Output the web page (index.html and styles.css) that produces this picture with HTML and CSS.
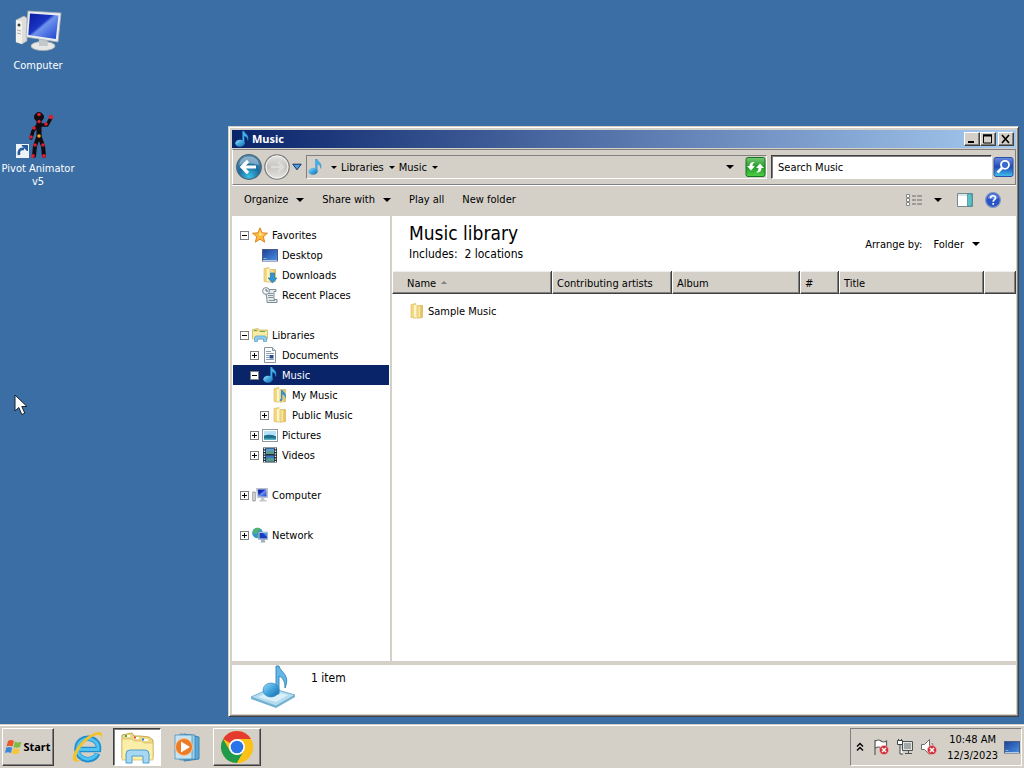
FILE: index.html
```html
<!DOCTYPE html>
<html lang="en">
<head>
<meta charset="utf-8">
<title>Music</title>
<link rel="stylesheet" href="styles.css">
</head>
<body>
<svg class="defs" aria-hidden="true">
  <defs>
    <linearGradient id="gBlue" x1="0" y1="0" x2="1" y2="1"><stop offset="0" stop-color="#9fdcf8"/><stop offset=".5" stop-color="#3fa4de"/><stop offset="1" stop-color="#1667a8"/></linearGradient>
    <linearGradient id="gFolder" x1="0" y1="0" x2="1" y2="0"><stop offset="0" stop-color="#f8e9a0"/><stop offset="1" stop-color="#e3bd58"/></linearGradient>
    <linearGradient id="gScreen" x1="0" y1="0" x2="1" y2="1"><stop offset="0" stop-color="#0a1a9c"/><stop offset=".42" stop-color="#1a35c4"/><stop offset=".5" stop-color="#6f93ec"/><stop offset="1" stop-color="#1b3fd0"/></linearGradient>
    <linearGradient id="gDesk" x1="0" y1="0" x2="1" y2="1"><stop offset="0" stop-color="#1d3f96"/><stop offset="1" stop-color="#4a92e6"/></linearGradient>
    <radialGradient id="gBack" cx=".5" cy=".9" r=".9"><stop offset="0" stop-color="#3cc0e4"/><stop offset=".5" stop-color="#1b6d9f"/><stop offset="1" stop-color="#5a8fb0"/></radialGradient>
    <linearGradient id="gFwd" x1="0" y1="0" x2="0" y2="1"><stop offset="0" stop-color="#e4e3e0"/><stop offset=".5" stop-color="#c6c4c0"/><stop offset="1" stop-color="#e6e5e3"/></linearGradient>
    <linearGradient id="gGreen" x1="0" y1="0" x2="0" y2="1"><stop offset="0" stop-color="#77c877"/><stop offset=".5" stop-color="#229a2a"/><stop offset="1" stop-color="#4fd045"/></linearGradient>
    <linearGradient id="gFind" x1="0" y1="0" x2="0" y2="1"><stop offset="0" stop-color="#6c8be0"/><stop offset=".5" stop-color="#1f49b8"/><stop offset="1" stop-color="#40c4ec"/></linearGradient>
  </defs>
  <symbol id="note" viewBox="0 0 16 16"><path d="M8.500 0H10c.3 2.500 5.500 3.500 3.800 9.500-.2-2.800-1.400-4-3.600-4.500V12H8.500z" fill="#45aee8" stroke="#2385c4" stroke-width=".4"/><ellipse cx="6" cy="12.200" rx="4.700" ry="3.500" fill="url(#gBlue)"/></symbol>
  <symbol id="star" viewBox="0 0 16 16"><path d="M8 .8l2 5 5.500.4-4.200 3.500 1.400 5.500L8 12.200l-4.700 3 1.400-5.500L.5 6.200 6 5.800z" fill="#fdb93a" stroke="#dc7a1e" stroke-width=".9"/><path d="M8 3.500l1.200 3.300 3.200.3-5.400 2z" fill="#ffeb9a"/></symbol>
  <symbol id="desk" viewBox="0 0 16 16"><rect x=".5" y="2.500" width="15" height="11.500" fill="url(#gDesk)" stroke="#4b5d84"/><path d="M1 13.500h14" stroke="#b9cbe6"/><path d="M1.500 11.500h3" stroke="#7fc0a4"/></symbol>
  <symbol id="folder" viewBox="0 0 16 16"><path d="M2 1.500L7 .5v14.800l-5-.8z" fill="#f3d880" stroke="#d9b85c" stroke-width=".6"/><path d="M5 2.500l3-1.200V15l-3-1z" fill="#fff6c8"/><path d="M8 5V2.500h5.500v12L8 15.300z" fill="url(#gFolder)" stroke="#d3ad52" stroke-width=".6"/><path d="M10.500 4v10" stroke="#f8e6a0"/></symbol>
  <symbol id="down" viewBox="0 0 16 16"><use href="#folder"/><path d="M8.500 6h4v5H15l-4.500 5L6 11h2.500z" fill="#2f96d4" stroke="#1a6fae" stroke-width=".6"/></symbol>
  <symbol id="mymusic" viewBox="0 0 16 16"><use href="#folder"/><path d="M9 3h1.500c.2 1.500 4.900 3 3.200 9-.2-2-1.200-4-3.200-4.500V13c-2 2.500-4 .5-2-1H9z" fill="#3b8fc6"/></symbol>
  <symbol id="recent" viewBox="0 0 16 16"><path d="M3 2.500h11v2h-2v8h3v3H5v-3z" fill="#e6eaec" stroke="#7e8c94"/><path d="M6 6.500h5M6 8.500h5M6 10.500h5M7 13.500h6" stroke="#86949c"/><circle cx="4" cy="4" r="3.400" fill="#f2f5f6" stroke="#7e8c94"/><path d="M4 2v2h2" stroke="#516c80" fill="none"/></symbol>
  <symbol id="libs" viewBox="0 0 16 16"><path d="M.5 2.500L6 1.500l1 1.500h8.500v9H.5z" fill="#eedc86" stroke="#c7b055" stroke-width=".7"/><path d="M1 5h14v7H1z" fill="#f8eca4"/><path d="M2 3.500h3M8 4.500h5" stroke="#64a85e"/><path d="M2.500 14.500V11q0-2 2-2h8q2 0 2 2v3.500h-3V12h-6v2.500z" fill="#8fcdf0" stroke="#4d9cc8" stroke-width=".7"/></symbol>
  <symbol id="doc" viewBox="0 0 16 16"><path d="M2.500.5h8l3 3v12h-11z" fill="#fff" stroke="#87949c"/><path d="M4 4.500h5M4 6.500h8M4 8.500h3M4 10.500h3M4 12.500h8" stroke="#8b9db0"/><path d="M7.500 8h4v3.500h-4z" fill="#274d8e"/><path d="M10.500.5v3h3" fill="#dce4ea" stroke="#87949c"/></symbol>
  <symbol id="pic" viewBox="0 0 16 16"><rect x=".5" y="2.500" width="15" height="12" fill="#fff" stroke="#8d9aa2"/><path d="M2 4h12v4H2z" fill="#b5e2f6"/><path d="M2 8.500q6-1.500 12 .5v4H2z" fill="#1f7090"/><path d="M2 11.500h12V13H2z" fill="#58b4bb"/></symbol>
  <symbol id="film" viewBox="0 0 16 16"><path d="M1 .5h14v15H1z" fill="#23303c"/><path d="M4 1.500h8V7H4z" fill="#5a9fd6"/><path d="M4 8.500h8v6H4z" fill="#3a78c0"/><path d="M4 6q4-4 8-1v2H4zM4 13q4-4 8-1v2.500H4z" fill="#5c9b88"/><path d="M2.500 1v14.500M13.500 1v14.500" stroke="#e9eef2" stroke-width="1.400" stroke-dasharray="1.300 1.300"/></symbol>
  <symbol id="pc" viewBox="0 0 16 16"><path d="M.7 5h2.600v9H.7z" fill="#dadbd8" stroke="#7f8588" stroke-width=".7"/><path d="M4.500 1.500h11v9h-10z" fill="#cbd3df" stroke="#9aa3b6" stroke-width=".6"/><path d="M5.800 2.500h8.700v7H6.500z" fill="url(#gScreen)"/><path d="M9 10.500h3l.5 2.500h2v1.500H7.500V13H9z" fill="#c2c8d0"/></symbol>
  <symbol id="net" viewBox="0 0 16 16"><circle cx="5.500" cy="6" r="5.300" fill="#3397cf"/><path d="M2 2.500Q6-.5 8.500 2L6 4 4.500 7 1 6zM5 8l3 1-1 2-2-1z" fill="#52b567"/><path d="M6.500 5h9v7.500h-9z" fill="#cdd8e2" stroke="#6c85a8" stroke-width=".5"/><path d="M7.500 6H15v5.500H7.500z" fill="#123fc4"/><path d="M11 6h4v4z" fill="#4b8fe8"/><path d="M9.500 12.500h3l1 3h-5z" fill="#9fafbf"/></symbol>
  <symbol id="badge" viewBox="0 0 10 10"><circle cx="5" cy="5" r="4.600" fill="#d3303a" stroke="#f1b1b1" stroke-width=".7"/><path d="M3 3l4 4M7 3L3 7" stroke="#fff" stroke-width="1.500"/></symbol>
</svg>

<main class="desktop">
  <a class="shortcut" href="#computer">
    <svg class="pic48" viewBox="0 0 48 48"><path d="M2 12l8-4 3 2v23l-5 3-6-2z" fill="#dddeda" stroke="#a2a7aa" stroke-width=".7"/><path d="M2 12l6 1v23l-6-2z" fill="#f1f1ee"/><circle cx="5" cy="17" r="1.500" fill="#38443f"/><path d="M3 22l4 1M3 25l4 1" stroke="#a9aaa5"/><ellipse cx="29" cy="38" rx="12" ry="4.500" fill="#e7e8e6" stroke="#a9adb0" stroke-width=".8"/><path d="M25 30h8l1 8h-9z" fill="#c4c8ca"/><path d="M14 3l33 2-3 29-32-5z" fill="#e9edef" stroke="#a7aeb6" stroke-width=".8"/><path d="M16 5.500l28.500 2-2.700 23.500L14.300 27z" fill="url(#gScreen)"/></svg>
    <span>Computer</span>
  </a>
  <a class="shortcut" href="#pivot">
    <svg class="pic48" viewBox="0 0 48 48"><g stroke="#120b10" stroke-linecap="round" fill="none"><circle cx="25" cy="6" r="4.500" fill="#120b10"/><path d="M25 9v15" stroke-width="5"/><path d="M25 14l8 0 4-7M24 14l-5 6-2 7" stroke-width="3.400"/><path d="M25 24l-4 11-1 10M25 24l4 11 1 10" stroke-width="4"/></g><g fill="#e01f2c"><circle cx="25" cy="3.500" r="1.800"/><circle cx="25" cy="10.500" r="1.700"/><circle cx="37" cy="6" r="2.200"/><circle cx="32" cy="13" r="1.800"/><circle cx="20" cy="17" r="1.800"/><circle cx="17" cy="26" r="1.800"/><circle cx="21" cy="34" r="1.800"/><circle cx="29" cy="34" r="1.800"/><circle cx="19" cy="45" r="1.900"/><circle cx="30" cy="45" r="1.900"/></g><circle cx="25" cy="25" r="1.800" fill="#e8a820"/><path d="M2 33h13v14H2z" fill="#eef3f7"/><path d="M5 44q-1-7 5-6" stroke="#235a9c" stroke-width="2.600" fill="none"/><path d="M8 34.500h5.500V40z" fill="#235a9c" stroke="#235a9c"/></svg>
    <span>Pivot Animator v5</span>
  </a>

  <section class="window" aria-label="Music">
    <header class="titlebar">
      <svg class="i16"><use href="#note"/></svg>
      <h1>Music</h1>
      <div class="winbtns">
        <button aria-label="Minimize"><svg viewBox="0 0 12 10"><path d="M2 8h6" stroke="#000" stroke-width="2"/></svg></button>
        <button aria-label="Maximize"><svg viewBox="0 0 12 10"><path d="M1.500 1v8h8V1M1 1h9" stroke="#000" fill="none"/><path d="M1 1.500h9" stroke="#000" stroke-width="2"/></svg></button>
        <button class="close" aria-label="Close"><svg viewBox="0 0 12 10"><path d="M2 1l7 8M9 1L2 9" stroke="#000" stroke-width="1.600"/></svg></button>
      </div>
    </header>

    <nav class="navbar">
      <button class="round" aria-label="Back"><svg viewBox="0 0 26 26"><circle cx="13" cy="13" r="12.300" fill="url(#gBack)" stroke="#46667c" stroke-width="1.200"/><path d="M3 11Q4 2.500 13 2.500T23 11Q13 8 3 11z" fill="#fff" opacity=".35"/><path d="M12 7l-6 6 6 6M7 13h13" stroke="#fff" stroke-width="3.200" fill="none"/></svg></button>
      <button class="round" aria-label="Forward"><svg viewBox="0 0 26 26"><circle cx="13" cy="13" r="12.200" fill="url(#gFwd)" stroke="#7e7f80" stroke-width="1.300"/><circle cx="13" cy="13" r="11" fill="none" stroke="#f5f5f4"/><path d="M14 8l5 5-5 5M18 13H7" stroke="#dcdbd8" stroke-width="2.500" fill="none"/></svg></button>
      <button class="recentbtn" aria-label="Recent pages"><svg viewBox="0 0 10 8"><path d="M.8 1.200h8.400L5 6.800z" fill="#4aa3e8" stroke="#12305c"/></svg></button>
      <div class="address">
        <svg class="i16"><use href="#note"/></svg>
        <button class="crumb" aria-label="Locations"><i class="arrow small"></i></button>
        <button class="crumb">Libraries <i class="arrow small"></i></button>
        <button class="crumb">Music <i class="arrow small"></i></button>
        <button class="crumb last" aria-label="Previous locations"><i class="arrow"></i></button>
        <button class="go" aria-label="Refresh"><svg viewBox="0 0 20 20"><rect x=".5" y=".5" width="19" height="19" rx="2" fill="url(#gGreen)" stroke="#16761e"/><path d="M9.500 5C6.500 4.500 4 5.500 4 9H1.500l4 4.500L9.500 9H7c0-2 1-3.500 2.500-4zM18.500 11l-4-4.500-4 4.500H13c0 2-1 3.500-2.500 4.500 3 .5 5.500-1 5.500-4.500z" fill="#fff"/></svg></button>
      </div>
      <form class="search">
        <input type="text" aria-label="Search Music" placeholder="Search Music">
        <button type="button" aria-label="Search"><svg viewBox="0 0 20 20"><rect x=".5" y=".5" width="19" height="19" rx="2" fill="url(#gFind)" stroke="#2a4fa8"/><circle cx="11.500" cy="7.800" r="4" fill="#3b69cc" stroke="#fff" stroke-width="1.800"/><path d="M8.500 11L4 15.500" stroke="#fff" stroke-width="2.600"/></svg></button>
      </form>
    </nav>

    <div class="commands">
      <button>Organize <i class="arrow"></i></button>
      <button>Share with <i class="arrow"></i></button>
      <button>Play all</button>
      <button>New folder</button>
      <div class="tools">
        <button aria-label="Change view"><svg class="i16" viewBox="0 0 16 16"><path d="M.5 2.500h3v3h-3zM.5 6.500h3v3h-3zM.5 10.500h3v3h-3z" fill="#fff" stroke="#85888a"/><path d="M6 4h4M11 4h5M6 8h4M11 8h5M6 12h4M11 12h5" stroke="#626669"/></svg></button>
        <button class="more" aria-label="More views"><i class="arrow"></i></button>
        <button aria-label="Show preview pane"><svg class="i16" viewBox="0 0 16 16"><path d="M.5 1.500h15v13H.5z" fill="#fff" stroke="#748b94"/><path d="M10.500 2h4.500v12h-4.500z" fill="#5fc0c8" stroke="#2f8d96" stroke-width=".7"/><path d="M1 3h9" stroke="#b9cdd2"/></svg></button>
        <button aria-label="Help"><svg class="i16" viewBox="0 0 16 16"><circle cx="8" cy="8" r="7.400" fill="#2a55c4" stroke="#8096c4" stroke-width="1.200"/><path d="M2.500 6Q4 2 8 2t5.500 4Q8 8 2.500 6z" fill="#7ba0ec" opacity=".7"/><path d="M5.500 6.200C5.500 3 10.500 3 10.500 6c0 1.700-2.300 1.700-2.300 3.700M8.200 11v1.800" stroke="#fff" stroke-width="1.700" fill="none"/></svg></button>
      </div>
    </div>

    <div class="body">
      <aside class="tree">
        <ul>
          <li class="l0"><button class="tog minus" aria-label="Collapse"></button><svg class="i16"><use href="#star"/></svg><a href="#favorites">Favorites</a></li>
          <li class="l1"><span class="tog none"></span><svg class="i16"><use href="#desk"/></svg><a href="#desktop">Desktop</a></li>
          <li class="l1"><span class="tog none"></span><svg class="i16"><use href="#down"/></svg><a href="#downloads">Downloads</a></li>
          <li class="l1"><span class="tog none"></span><svg class="i16"><use href="#recent"/></svg><a href="#recent-places">Recent Places</a></li>
        </ul>
        <ul>
          <li class="l0"><button class="tog minus" aria-label="Collapse"></button><svg class="i16"><use href="#libs"/></svg><a href="#libraries">Libraries</a></li>
          <li class="l1"><button class="tog plus" aria-label="Expand"></button><svg class="i16"><use href="#doc"/></svg><a href="#documents">Documents</a></li>
          <li class="l1 selected"><button class="tog minus" aria-label="Collapse"></button><svg class="i16"><use href="#note"/></svg><a href="#music">Music</a></li>
          <li class="l2"><span class="tog none"></span><svg class="i16"><use href="#mymusic"/></svg><a href="#my-music">My Music</a></li>
          <li class="l2"><button class="tog plus" aria-label="Expand"></button><svg class="i16"><use href="#folder"/></svg><a href="#public-music">Public Music</a></li>
          <li class="l1"><button class="tog plus" aria-label="Expand"></button><svg class="i16"><use href="#pic"/></svg><a href="#pictures">Pictures</a></li>
          <li class="l1"><button class="tog plus" aria-label="Expand"></button><svg class="i16"><use href="#film"/></svg><a href="#videos">Videos</a></li>
        </ul>
        <ul>
          <li class="l0"><button class="tog plus" aria-label="Expand"></button><svg class="i16"><use href="#pc"/></svg><a href="#this-computer">Computer</a></li>
        </ul>
        <ul>
          <li class="l0"><button class="tog plus" aria-label="Expand"></button><svg class="i16"><use href="#net"/></svg><a href="#network">Network</a></li>
        </ul>
      </aside>

      <div class="content">
        <div class="libhead">
          <div>
            <h2>Music library</h2>
            <p>Includes:&nbsp; <a href="#locations">2 locations</a></p>
          </div>
          <div class="arrange"><span id="arr">Arrange by:</span><button aria-describedby="arr">Folder <i class="arrow"></i></button></div>
        </div>
        <table class="files">
          <colgroup><col class="c-name"><col class="c-artist"><col class="c-album"><col class="c-num"><col class="c-title"><col></colgroup>
          <thead><tr><th>Name <i class="sort"></i></th><th>Contributing artists</th><th>Album</th><th>#</th><th>Title</th><th></th></tr></thead>
          <tbody><tr><td colspan="6"><a href="#sample-music"><svg class="i16"><use href="#folder"/></svg>Sample Music</a></td></tr></tbody>
        </table>
      </div>
    </div>

    <footer class="details">
      <svg class="bigicon" viewBox="0 0 46 44"><path d="M1 32l20-9 24 7-19 11z" fill="#b5dcee" stroke="#79b4d1"/><path d="M1 32v2l25 9 19-11v-2L26 41z" fill="#6fb0d2"/><path d="M8 32l13-6 17 4-12 7z" fill="#d9f0fa"/><path d="M26 1h3c1 6 12 9 6 22 0-7-2-10-6-12v18h-3z" fill="#63b6e6" stroke="#2d82b8" stroke-width=".9"/><ellipse cx="21" cy="25" rx="8" ry="7" fill="url(#gBlue)" stroke="#2879b4" stroke-width=".6"/></svg>
      <span>1 item</span>
    </footer>
  </section>

  <svg class="cursor" viewBox="0 0 14 22"><path d="M1 1v16l3.800-3.500 3 7 3-1.300-3-6.700H13z" fill="#fff" stroke="#17202c"/></svg>
</main>

<footer class="taskbar">
  <button class="start"><svg class="i18" viewBox="0 0 18 18"><path d="M3 3q3-2 6 0L7.500 8.500q-3-1.500-6 0z" fill="#e8582c"/><path d="M10 3.500q3 2 6.500 0L15 9q-3 1.500-6.500 0z" fill="#7dbb42"/><path d="M1.200 9.700q3-1.500 6 0L6 15q-3-1.700-6 0z" fill="#3c86d8"/><path d="M8.300 10.200q3 1.500 6.500 0L13.300 15.500q-3 1.500-6.300 0z" fill="#f8c534"/></svg>Start</button>
  <button class="task" aria-label="Internet Explorer"><svg viewBox="0 0 34 34"><path d="M8.500 19.500H28.500C30 5.500 7.500 4 7 18.500c-.3 13 17.500 14.500 20.500 5" fill="none" stroke="#1f8fd0" stroke-width="5.500"/><path d="M8.500 19.500H28C29.500 6 8 5 7.500 18.500c0 12 16 13.500 19.500 5" fill="none" stroke="#4fc3f2" stroke-width="3"/><path d="M4 31C-2 26 16 2 29 2c4 0 4 4 2 8 1-4 0-5-3-5C20 5 4 22 7 29q1 2 5 0-5 4-8 2z" fill="#f4c22e"/></svg></button>
  <button class="task active" aria-label="Music"><svg viewBox="0 0 34 34"><path d="M2 5l10-2 2 3h6l9 1 4 3v18H2z" fill="#eed987" stroke="#c7a84f"/><path d="M5 5h5v2H5zM14 7h5v2h-5zM22 9h6v2h-6z" fill="#fff"/><path d="M5 6h2" stroke="#3fa45a" stroke-width="2"/><path d="M14 7.500h2" stroke="#d64f37" stroke-width="2"/><path d="M22 9.500h2" stroke="#3678c8" stroke-width="2"/><path d="M2 9h10l2 2h8l2 2h9v17H2z" fill="#fbeea9" stroke="#d3b65e" stroke-width=".7"/><path d="M6 33V24q0-4 4-4h15q4 0 4 4v9h-6v-7H12v7z" fill="#a6d8f3" stroke="#4f9fcc"/></svg></button>
  <button class="task" aria-label="Windows Media Player"><svg viewBox="0 0 34 34"><path d="M14 4l15 3v22l-15 2z" fill="#5aa8d8" stroke="#3c83b2"/><path d="M10 4l15 1v24l-15 1z" fill="#9ed0ea" stroke="#3c83b2" stroke-width=".8"/><path d="M5 5h17v24H5z" fill="#c6e4f2" stroke="#4b93bd" stroke-width=".8"/><circle cx="14" cy="17" r="8.500" fill="#ed7a24" stroke="#fbc18e"/><path d="M11 11.500l9 5.500-9 5.500z" fill="#fff"/></svg></button>
  <button class="task raised" aria-label="Chrome"><svg viewBox="0 0 34 34"><circle cx="17" cy="17" r="16" fill="#fbc116"/><path d="M17 17L3.140 9A16 16 0 0 1 30.860 9H17z" fill="#e33b2e"/><path d="M3.140 9A16 16 0 0 0 17 33l6.930-12L17 17l-6.930 4z" fill="#229a4c"/><path d="M17 9h13.860A16 16 0 0 1 17 33l6.930-12z" fill="#fbc116"/><circle cx="17" cy="17" r="8" fill="#fff"/><circle cx="17" cy="17" r="6.300" fill="#2a73e8"/></svg></button>
  <div class="tray">
    <button aria-label="Show hidden icons"><svg class="chev" viewBox="0 0 8 10"><path d="M1 4.500l3-3 3 3M1 8.500l3-3 3 3" stroke="#000" stroke-width="1.400" fill="none"/></svg></button>
    <button aria-label="Action Center"><svg class="i18" viewBox="0 0 18 18"><path d="M3 2v15M3.500 3q3-2 5.500 0t5.500 0v7q-3 2-5.500 0T3.500 10" fill="#fff" stroke="#5b5d5e" stroke-width="1.200"/><use href="#badge" x="7" y="7" width="10" height="10"/></svg></button>
    <button aria-label="Network"><svg class="i18" viewBox="0 0 18 18"><path d="M6.500 3.500h10v9h-10z" fill="#e2e4e3" stroke="#4e5152"/><path d="M8 5h7v6H8z" fill="#a2a7a8"/><path d="M9 15.500h7M12.500 13v2" stroke="#4e5152"/><path d="M1.500 2.500h5v4h-5zM4 7v9h3" fill="#fff" stroke="#3f4243"/><path d="M2.500 1v2M5.500 1v2" stroke="#3f4243"/></svg></button>
    <button aria-label="Volume"><svg class="i18" viewBox="0 0 18 18"><path d="M1.500 6.500h3l5-5v15l-5-5h-3z" fill="#fff" stroke="#6c6e6f"/><path d="M12 5q2 3 1 6" stroke="#77797a" fill="none"/><use href="#badge" x="7" y="7" width="10" height="10"/></svg></button>
    <div class="clock"><time>10:48 AM</time><time>12/3/2023</time></div>
    <button aria-label="Show desktop"><svg class="i16"><use href="#desk"/></svg></button>
  </div>
</footer>
</body>
</html>
```
FILE: styles.css
```css
* { box-sizing: border-box; }
html, body { height: 100%; margin: 0; }
body {
  display: flex;
  flex-direction: column;
  background: #3a6ea5;
  color: #000;
  font: 11px/17px "DejaVu Sans Condensed", "Noto Sans", sans-serif;
}
button { font: inherit; color: inherit; background: none; border: 0; padding: 0; margin: 0; display: flex; align-items: center; }
a { color: inherit; text-decoration: none; }
svg { display: block; flex: none; }
.defs { position: absolute; width: 0; height: 0; }
.i16 { width: 16px; height: 16px; }
.i18 { width: 18px; height: 18px; }
.arrow { width: 0; height: 0; border: 4px solid transparent; border-top-color: #000; border-bottom: 0; }
.arrow.small { border-width: 3px 3px 0; }

.desktop { flex: 1; min-height: 0; position: relative; padding: 8px 0; display: flex; flex-direction: column; align-items: flex-start; gap: 39px; }
.shortcut { width: 76px; display: flex; flex-direction: column; align-items: center; gap: 3px; color: #fff; text-align: center; line-height: 13px; }
.pic48 { width: 48px; height: 48px; }
.cursor { position: absolute; left: 14px; top: 394px; width: 14px; height: 22px; }

.window {
  position: absolute; left: 228px; right: 5px; top: 126px; bottom: 7px;
  display: flex; flex-direction: column;
  background: #d4d0c8;
  border: 1px solid; border-color: #d4d0c8 #404040 #404040 #d4d0c8;
  box-shadow: inset 1px 1px #fff, inset -1px -1px #808080;
  padding: 3px 2px 2px 3px;
}
.titlebar { display: flex; align-items: center; gap: 2px; height: 18px; flex: none; padding: 0 2px; background: linear-gradient(90deg, #0a246a, #a6caf0); color: #fff; }
.titlebar h1 { font: 700 11px/16px "Noto Sans", sans-serif; margin: 0; flex: 1; }
.winbtns { display: flex; }
.winbtns button { width: 16px; height: 14px; justify-content: center; background: #d4d0c8; border: 1px solid; border-color: #fff #404040 #404040 #fff; box-shadow: inset -1px -1px #808080; }
.winbtns svg { width: 12px; height: 10px; }
.winbtns .close { margin-left: 2px; }

.navbar { display: flex; align-items: center; flex: none; height: 36px; margin-top: 1px; padding: 0 0 0 3px; border: 1px solid #808080; border-left-color: #fff; box-shadow: 0 1px #fff; }
.round { margin-right: 2px; }
.round svg { width: 26px; height: 26px; }
.recentbtn { padding: 0 4px 0 0; }
.recentbtn svg { width: 10px; height: 8px; }
.address { flex: 1; display: flex; align-items: center; gap: 4px; height: 24px; border: 1px solid; border-color: #808080 #fff #fff #808080; }
.address .i16 { margin-right: 4px; }
.crumb { gap: 5px; }
.address .crumb.last { margin-left: auto; }
.go { margin-left: 7px; }
.go svg, .search svg { width: 21px; height: 20px; }
.search { flex: 0 1 243px; min-width: 120px; display: flex; align-items: center; margin: 0 1px 0 4px; gap: 1px; }
.search input { flex: 1; min-width: 0; height: 24px; font: inherit; padding: 0 6px; background: #fff; border: 1px solid; border-color: #404040 #fff #fff #404040; box-shadow: inset 1px 1px #808080; outline: 0; }
.search input::placeholder { color: #000; opacity: 1; }

.commands { display: flex; align-items: center; flex: none; height: 31px; gap: 18px; padding: 0 15px 2px 12px; }
.commands button { gap: 8px; }
.tools { display: flex; gap: 12px; margin-left: auto; }
.tools .more { padding-right: 3px; }

.body { flex: 1; min-height: 0; display: flex; }
.tree { width: 158px; flex: none; background: #fff; padding: 9px 0 0 1px; }
.tree ul { list-style: none; margin: 0 0 20px; padding: 0; }
.tree li { display: flex; align-items: center; height: 20px; margin-right: 1px; }
.tree .l0 { padding-left: 7px; }
.tree .l1 { padding-left: 17px; }
.tree .l2 { padding-left: 27px; }
.tree .i16 { margin: 0 4px 0 3px; }
.tree .selected { background: #0a246a; color: #fff; }
.tog { width: 9px; height: 9px; flex: none; border: 1px solid #808080; background: linear-gradient(#000, #000) center / 5px 1px no-repeat #fff; }
.plus { background: linear-gradient(#000, #000) center / 5px 1px no-repeat, linear-gradient(#000, #000) center / 1px 5px no-repeat #fff; }
.tog.none { border: 0; background: none; }

.content { flex: 1; min-width: 0; background: #fff; border-left: 2px solid #d4d0c8; }
.libhead { height: 55px; display: flex; justify-content: space-between; padding: 5px 36px 4px 17px; }
.libhead h2 { font-size: 19px; line-height: 25px; font-weight: 400; margin: 0; }
.libhead p { font-size: 12px; line-height: 16px; margin: 0; }
.arrange { display: flex; align-items: center; gap: 11px; }
.arrange button { gap: 8px; }
.files { width: 100%; table-layout: fixed; border-collapse: separate; border-spacing: 0; }
.c-name { width: 160px; }
.c-artist { width: 120px; }
.c-album { width: 128px; }
.c-num { width: 39px; }
.c-title { width: 145px; }
.files th { height: 23px; padding: 2px 4px 0; text-align: left; font-weight: 400; background: #d4d0c8; border-right: 1px solid #404040; border-bottom: 1px solid #404040; border-left: 1px solid #fff; box-shadow: inset 0 1px #f0eeea, inset -1px -1px #808080; white-space: nowrap; }
.files th:first-child { padding-left: 14px; }
.sort { display: inline-block; margin: 0 0 3px 2px; border: 3px solid transparent; border-top: 0; border-bottom-color: #808080; }
.files td { padding: 7px 0 0 17px; }
.files td a { display: inline-flex; align-items: center; gap: 3px; height: 20px; }

.details { flex: none; height: 53px; display: flex; background: #fff; border-top: 4px solid #d4d0c8; padding: 0 18px; gap: 15px; font-size: 12px; }
.bigicon { width: 46px; height: 44px; }
.details span { padding-top: 5px; }

.taskbar { flex: none; height: 44px; display: flex; align-items: stretch; background: #d4d0c8; border-top: 1px solid #d4d0c8; box-shadow: inset 0 1px #fff; padding: 3px 2px 2px; }
.taskbar > button { justify-content: center; border: 1px solid transparent; }
.taskbar .start { width: 52px; font: 700 11px/16px "Noto Sans", sans-serif; margin-right: 9px; }
.taskbar .start, .taskbar .raised { border-color: #fff #404040 #404040 #fff; box-shadow: inset -1px -1px #808080; }
.taskbar .task { width: 48px; margin-right: 2px; }
.taskbar .task svg { width: 34px; height: 34px; }
.taskbar .active { background: #fff; border-color: #404040 #fff #fff #404040; box-shadow: inset 1px 1px #808080; }
.tray { margin-left: auto; display: flex; align-items: center; gap: 6px; padding: 0 1px 0 5px; border: 1px solid; border-color: #808080 #fff #fff #808080; }
.chev { width: 8px; height: 10px; margin-right: 2px; }
.clock { display: flex; flex-direction: column; text-align: center; line-height: 16px; padding-top: 1px; margin-left: 3px; }
```
